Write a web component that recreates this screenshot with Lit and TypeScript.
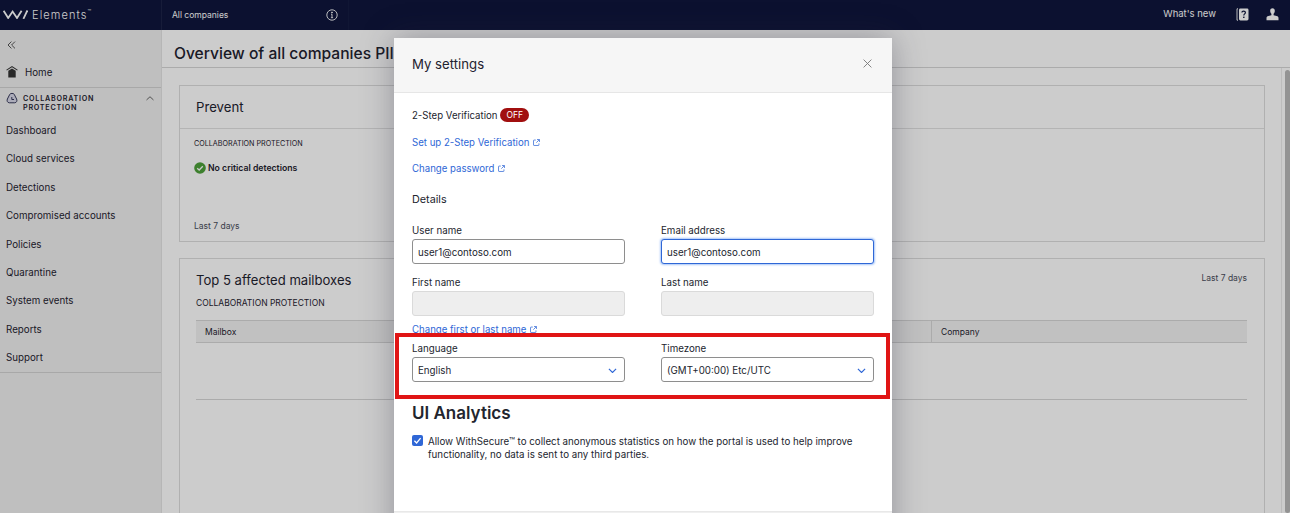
import { LitElement, css, html, svg } from 'lit'
import { customElement } from 'lit/decorators.js'

const NAV = ['Dashboard', 'Cloud services', 'Detections', 'Compromised accounts', 'Policies', 'Quarantine', 'System events', 'Reports', 'Support']

const externalIcon = svg`<svg class="ext" viewBox="0 0 8 8" width="7" height="7" fill="none" stroke="#3b6fd8" stroke-width="0.9">
  <path d="M3.2 1.2H1.2a.6.6 0 0 0-.6.6v5a.6.6 0 0 0 .6.6h5a.6.6 0 0 0 .6-.6V5"/><path d="M4.6.6h2.8v2.8M7.2.8 3.8 4.2"/></svg>`

const chevronDown = svg`<svg viewBox="0 0 10 6" width="9" height="5.400" fill="none" stroke="#2f67d6" stroke-width="1.300"><path d="M1 1l4 4 4-4"/></svg>`

@customElement('app-root')
export class AppRoot extends LitElement {
  render() {
    return html`
      <div class="page">
        <header class="topbar">
          <div class="brand">
            <svg viewBox="0 0 25 9" width="25" height="9" fill="none" stroke="#fff" stroke-width="1.800">
              <path d="M.6.8 5.200 8l4.400-6.400L14 8 18.600.8"/><path d="M20.400 8.800 24.400.4"/>
            </svg>
            <span class="brand-name">Elements<sup>™</sup></span>
          </div>
          <div class="scope">
            <span>All companies</span>
            <svg viewBox="0 0 12 12" width="12" height="12" fill="none" stroke="#fff" stroke-width="0.9">
              <circle cx="6" cy="6" r="5.200"/><path d="M6 5.200v3.400M4.900 8.700h2.200M5 5.200h1" /><circle cx="6" cy="3.400" r="0.500" fill="#fff"/>
            </svg>
          </div>
          <div class="top-actions">
            <span class="whats-new">What's new</span>
            <svg viewBox="0 0 13 13" width="13" height="13">
              <path d="M2 .8H1v11.400h1" fill="none" stroke="#fff" stroke-width="0.9"/>
              <rect x="3" y=".5" width="9.500" height="12" rx="1.400" fill="#fff"/>
              <path d="M5.900 4.600c0-2 3.500-2 3.500 0 0 1.300-1.600 1.300-1.600 2.800" fill="none" stroke="#0f163c" stroke-width="1.200"/>
              <rect x="7.100" y="8.600" width="1.400" height="1.400" fill="#0f163c"/>
            </svg>
            <svg viewBox="0 0 13 13" width="13" height="13" fill="#fff">
              <path d="M6.500.3c1.500 0 2.300 1 2.300 2.500 0 1.300-.5 2.300-1.200 2.900v1.500l3 .9c1.300.4 1.900 1 1.900 2.100v2.100H.5v-2.100c0-1.100.6-1.700 1.900-2.100l3-.9V5.700C4.700 5.100 4.200 4.100 4.200 2.800 4.200 1.300 5 .3 6.500.3z"/>
            </svg>
          </div>
        </header>

        <div class="shell">
          <nav class="sidebar">
            <svg class="collapse" viewBox="0 0 9 8" width="9" height="8" fill="none" stroke="#444" stroke-width="0.9">
              <path d="M4.400.6 1 4l3.400 3.400M8 .6 4.600 4 8 7.400"/>
            </svg>
            <div class="home">
              <svg viewBox="0 0 12 12" width="12" height="12" fill="#333">
                <path d="M6 0 .3 3.800l.5.700L6 1.200l5.200 3.300.5-.700z"/><path d="M2.300 4.800 6 2.400l3.700 2.400V11.500H2.300z"/>
              </svg>
              <span>Home</span>
            </div>
            <div class="group">
              <svg class="group-icon" viewBox="0 0 12 12" width="12" height="12" fill="#d8d8e8" stroke="#23264a" stroke-width="0.9">
                <path d="M3.800 2.300C4.200 1.100 7.800 1.100 8.200 2.300L10.600 7c.8 1.700 0 3.800-2 3.800H3.400c-2 0-2.800-2.100-2-3.800z"/>
                <path d="M5.800 5v2.500h2.200" fill="none"/>
              </svg>
              <span class="group-name">COLLABORATION<br />PROTECTION</span>
              <svg class="chev" viewBox="0 0 9 5" width="8" height="4.500" fill="none" stroke="#444" stroke-width="0.9"><path d="M.6 4.400 4.500.8l3.900 3.600"/></svg>
            </div>
            <ul class="nav-list">
              ${NAV.map(item => html`<li>${item}</li>`)}
            </ul>
          </nav>

          <main class="main">
            <div class="title-bar"><h1>Overview of all companies PII</h1></div>
            <div class="content">
              <section class="card prevent">
                <div class="card-head">Prevent</div>
                <div class="card-body">
                  <div class="eyebrow">COLLABORATION PROTECTION</div>
                  <div class="status">
                    <svg viewBox="0 0 12 12" width="12" height="12">
                      <circle cx="6" cy="6" r="5.800" fill="#4da03a"/>
                      <path d="M3.200 6.200 5.200 8l3.600-3.800" fill="none" stroke="#fff" stroke-width="1.300"/>
                    </svg>
                    <span>No critical detections</span>
                  </div>
                  <div class="period">Last 7 days</div>
                </div>
              </section>
              <section class="card affected">
                <div class="affected-head">
                  <h2>Top 5 affected mailboxes</h2>
                  <span class="period">Last 7 days</span>
                </div>
                <div class="sub">COLLABORATION PROTECTION</div>
                <div class="table-head"><span>Mailbox</span><span>Company</span></div>
                <div class="table-body"></div>
              </section>
            </div>
            <div class="scrollbar"><div class="thumb"></div></div>
          </main>
        </div>

        <div class="backdrop"></div>

        <div class="modal">
          <div class="modal-head">
            <span>My settings</span>
            <svg viewBox="0 0 9 9" width="9" height="9" fill="none" stroke="#777" stroke-width="0.9"><path d="M.6.6l7.800 7.800M8.400.6 .6 8.400"/></svg>
          </div>
          <div class="modal-body">
            <div class="two-step">2-Step Verification <span class="off">OFF</span></div>
            <a class="link first">Set up 2-Step Verification ${externalIcon}</a>
            <a class="link second">Change password ${externalIcon}</a>
            <div class="details">Details</div>
            <div class="fields">
              <label>User name<span class="input">user1@contoso.com</span></label>
              <label>Email address<span class="input focus">user1@contoso.com</span></label>
            </div>
            <div class="fields names">
              <label>First name<span class="input off-field"></span></label>
              <label>Last name<span class="input off-field"></span></label>
            </div>
            <a class="link third">Change first or last name ${externalIcon}</a>
            <div class="fields prefs">
              <label>Language<span class="input select">English ${chevronDown}</span></label>
              <label>Timezone<span class="input select">(GMT+00:00) Etc/UTC ${chevronDown}</span></label>
            </div>
            <h3>UI Analytics</h3>
            <div class="consent">
              <svg viewBox="0 0 11 11" width="11" height="11">
                <rect width="11" height="11" rx="2" fill="#2f67d6"/>
                <path d="M2.400 5.700 4.600 8l4-4.800" fill="none" stroke="#fff" stroke-width="1.300"/>
              </svg>
              <span>Allow WithSecure™ to collect anonymous statistics on how the portal is used to help improve functionality, no data is sent to any third parties.</span>
            </div>
          </div>
          <div class="modal-foot"></div>
        </div>

        <div class="highlight"></div>
      </div>
    `
  }

  static styles = css`
    :host {
      display: block;
      font-family: Inter, 'Liberation Sans', sans-serif;
      color: #1f2330;
    }
    * {
      box-sizing: border-box;
    }
    .page {
      position: relative;
      display: flex;
      flex-direction: column;
      height: 513px;
      overflow: hidden;
      background: #fff;
    }
    .topbar {
      display: flex;
      flex: none;
      align-items: center;
      height: 30px;
      background: #0f163c;
      color: #fff;
    }
    .brand {
      display: flex;
      align-items: center;
      gap: 4px;
      width: 162px;
      height: 100%;
      padding-left: 3px;
      border-right: 1px solid #1d2448;
    }
    .brand svg {
      margin-bottom: 2px;
    }
    .brand-name {
      font-size: 11px;
      font-weight: 300;
      letter-spacing: 1.100px;
    }
    .brand-name sup {
      font-size: 6px;
      line-height: 0;
      letter-spacing: 0;
    }
    .scope {
      display: flex;
      align-items: center;
      justify-content: space-between;
      width: 187px;
      height: 100%;
      padding: 0 10px 0 10px;
      border-right: 1px solid #151c42;
      font-size: 8.500px;
    }
    .top-actions {
      display: flex;
      align-items: center;
      margin-left: auto;
      padding-right: 11px;
    }
    .top-actions svg {
      margin-bottom: 1px;
    }
    .whats-new {
      margin: 0 20px 3px 0;
      font-size: 9.500px;
    }
    .top-actions svg:last-child {
      margin-left: 17px;
    }
    .shell {
      display: flex;
      flex: 1;
      min-height: 0;
    }
    .sidebar {
      flex: none;
      width: 162px;
      background: #efefef;
      border-right: 1px solid #e4e4e4;
    }
    .collapse {
      display: block;
      margin: 11px 0 0 7px;
    }
    .home {
      display: flex;
      align-items: center;
      gap: 7px;
      height: 30px;
      margin-top: 9px;
      padding: 0 0 1px 6px;
      border-bottom: 1px solid #d2d2d2;
      font-size: 9.750px;
    }
    .group {
      display: flex;
      align-items: flex-start;
      height: 28.400px;
      padding: 6px 7px 0 6px;
    }
    .group-icon {
      margin-top: -2px;
    }
    .group-name {
      margin: 1px 0 0 5px;
      font-size: 7.200px;
      font-weight: 600;
      letter-spacing: 0.750px;
      line-height: 8.500px;
    }
    .chev {
      margin: 2px 0 0 auto;
    }
    .nav-list {
      margin: 0;
      padding: 0;
      border-bottom: 1px solid #d2d2d2;
      list-style: none;
      font-size: 9.750px;
    }
    .nav-list li {
      display: flex;
      align-items: center;
      height: 28.400px;
      padding-left: 6px;
    }
    .main {
      position: relative;
      flex: 1;
      min-width: 0;
      display: flex;
      flex-direction: column;
    }
    .title-bar {
      flex: none;
      display: flex;
      align-items: center;
      height: 38px;
      padding: 10px 0 0 12px;
      border-bottom: 1px solid #d6d6d6;
    }
    h1 {
      margin: 0;
      font-size: 15.600px;
      font-weight: 500;
      white-space: nowrap;
    }
    .content {
      display: flex;
      flex-direction: column;
      gap: 16px;
      padding: 17px 25px 0 17px;
    }
    .card {
      border: 1px solid #dcdcdc;
    }
    .prevent {
      height: 157px;
    }
    .card-head {
      display: flex;
      align-items: center;
      height: 43px;
      padding: 0 0 1px 16px;
      border-bottom: 1px solid #e2e2e2;
      font-size: 13.200px;
    }
    .card-body {
      display: flex;
      flex-direction: column;
      height: 112px;
      padding: 10px 14px;
    }
    .eyebrow {
      font-size: 7.200px;
      line-height: 10px;
    }
    .status {
      display: flex;
      align-items: center;
      gap: 2px;
      margin-top: 13px;
      font-size: 8.700px;
      font-weight: 600;
    }
    .period {
      font-size: 8.500px;
      color: #4a4e5c;
    }
    .card-body .period {
      margin-top: auto;
      margin-bottom: 0;
    }
    .affected {
      height: 300px;
      padding: 0 17px 0 16px;
    }
    .affected-head {
      display: flex;
      align-items: flex-start;
      justify-content: space-between;
      padding-top: 12px;
    }
    h2 {
      margin: 0;
      font-size: 13.100px;
      font-weight: 400;
      line-height: 18px;
    }
    .affected-head .period {
      line-height: 14px;
    }
    .sub {
      margin-top: 9px;
      font-size: 8.500px;
      line-height: 10px;
    }
    .table-head {
      display: grid;
      grid-template-columns: 735px 1fr;
      height: 23px;
      margin-top: 12px;
      background: #f2f2f2;
      border-top: 1px solid #d6d6d6;
      border-bottom: 1px solid #d6d6d6;
      font-size: 8.500px;
    }
    .table-head span {
      display: flex;
      align-items: center;
      padding: 1px 0 0 9px;
    }
    .table-head span + span {
      border-left: 1px solid #d6d6d6;
    }
    .table-body {
      height: 57px;
      border-bottom: 1px solid #d6d6d6;
    }
    .scrollbar {
      position: absolute;
      top: 38px;
      right: 0;
      bottom: 0;
      width: 9px;
      padding: 2px 0 0 3px;
      border-left: 1px solid #ececec;
    }
    .thumb {
      height: 100%;
      border-radius: 3px;
      background: #b8b8b8;
    }
    .backdrop {
      position: absolute;
      inset: 0;
      background: rgba(0, 0, 0, 0.2);
    }
    .modal {
      position: absolute;
      top: 38px;
      left: 394px;
      display: flex;
      flex-direction: column;
      width: 498px;
      height: 560px;
      background: #fff;
      box-shadow: 0 0 30px rgba(40, 40, 60, 0.35);
    }
    .modal-head {
      flex: none;
      display: flex;
      align-items: center;
      justify-content: space-between;
      height: 55px;
      padding: 0 20px 3px 18px;
      background: #f6f6f6;
      border-bottom: 1px solid #e6e6e6;
      font-size: 13.200px;
    }
    .modal-body {
      flex: none;
      display: flex;
      flex-direction: column;
      height: 418px;
      padding: 14px 18px 0;
      font-size: 9.750px;
      color: #22252e;
    }
    .modal-foot {
      flex: 1;
      background: #f0f0f0;
      border-top: 1px solid #e8e8e8;
    }
    .two-step {
      display: flex;
      align-items: center;
      gap: 3px;
      height: 16px;
      font-size: 9.650px;
    }
    .off {
      display: inline-flex;
      align-items: center;
      padding: 0 6px;
      height: 14px;
      border-radius: 7px;
      background: #a10f0f;
      color: #fff;
      font-size: 8.500px;
    }
    .link {
      display: block;
      font-size: 9.650px;
      line-height: 14px;
      color: #2f67d6;
    }
    .ext {
      margin-left: 1px;
    }
    .first {
      margin-top: 13px;
    }
    .second {
      margin-top: 12px;
    }
    .third {
      margin-top: 7px;
    }
    .details {
      margin-top: 16px;
      font-size: 10.800px;
      line-height: 16px;
    }
    .fields {
      display: grid;
      grid-template-columns: 213px 213px;
      gap: 36px;
      margin-top: 16px;
    }
    .names {
      margin-top: 12px;
    }
    .prefs {
      margin-top: 5px;
    }
    label {
      display: flex;
      flex-direction: column;
      gap: 1px;
      line-height: 14px;
    }
    .input {
      display: flex;
      align-items: center;
      justify-content: space-between;
      height: 25px;
      padding: 2px 7px 0 5px;
      border: 1px solid #8e8e8e;
      border-radius: 3px;
      background: #fff;
    }
    .focus {
      border-color: #2f67d6;
      box-shadow: 0 0 2px 1px #a8c6f8;
    }
    .off-field {
      background: #eeeeee;
      border-color: #dadada;
    }
    h3 {
      margin: 20px 0 0;
      font-size: 17px;
      font-weight: 600;
      line-height: 22px;
    }
    .consent {
      display: flex;
      align-items: flex-start;
      gap: 5px;
      margin-top: 11px;
      line-height: 13px;
    }
    .consent svg {
      flex: none;
    }
    .highlight {
      position: absolute;
      top: 333px;
      left: 395px;
      width: 495px;
      height: 66px;
      border: 4px solid #e01515;
    }
  `
}
